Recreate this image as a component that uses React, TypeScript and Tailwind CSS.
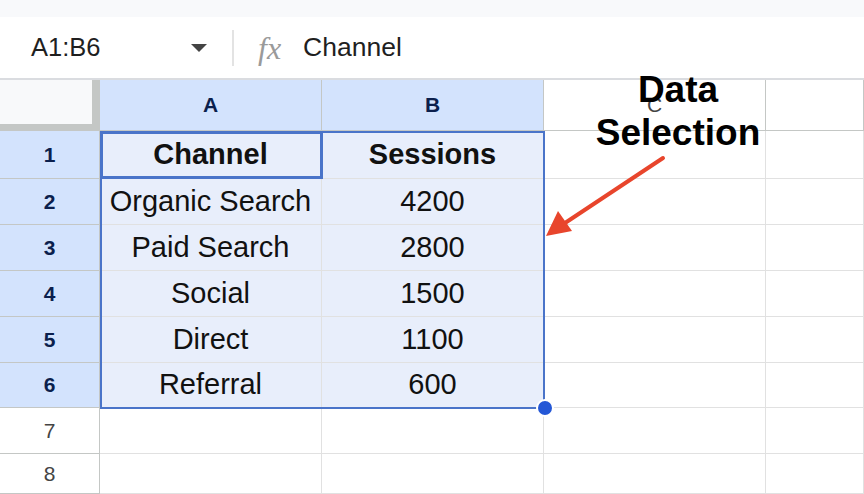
import React from "react";

const cols = ["A", "B", "C", ""];
const widths = ["w-[222px]", "w-[222px]", "w-[222px]", "flex-1"];
const data = [
  ["Channel", "Sessions"],
  ["Organic Search", "4200"],
  ["Paid Search", "2800"],
  ["Social", "1500"],
  ["Direct", "1100"],
  ["Referral", "600"],
  ["", ""],
  ["", ""],
];
const heights = ["h-[48px]", "h-[46px]", "h-[46px]", "h-[46px]", "h-[46px]", "h-[45px]", "h-[46px]", "h-[40px]"];

export default function App() {
  return (
    <div className="w-[864px] h-[494px] overflow-hidden bg-white relative" style={{ fontFamily: "Arial, 'Liberation Sans', sans-serif" }}>
      <div className="h-[17px] bg-[#f8f9fb]" />
      <div className="h-[63px] flex items-center border-b-2 border-[#dadce0] bg-white">
        <div className="w-[232px] flex items-center pl-[31px] pr-[24px] text-[25.5px] text-[#1f1f1f]">
          <span className="flex-1">A1:B6</span>
          <svg width="18" height="10" viewBox="0 0 18 10"><path d="M1 1h16L9 9z" fill="#444" /></svg>
        </div>
        <div className="w-[2px] h-[36px] bg-[#e3e3e3]" />
        <div className="ml-[24px] text-[#9a9a9a] italic text-[32px] leading-none" style={{ fontFamily: "'Liberation Serif', serif" }}>fx</div>
        <div className="ml-[22px] text-[26.5px] text-[#1f1f1f]">Channel</div>
      </div>
      {/* header row */}
      <div className="flex h-[51px]">
        <div className="w-[100px] bg-[#f8f9fa] border-r-[8px] border-b-[7px] border-[#c4c7c5] box-border" />
        {cols.map((c, i) => (
          <div key={i} className={`${widths[i]} flex items-center justify-center border-r border-b border-[#c4c7c5] text-[21px] ${i < 2 ? "bg-[#d3e3fd] font-bold text-[#0b1f4d]" : "bg-white text-[#444]"}`}>
            {c}
          </div>
        ))}
      </div>
      {data.map((r, ri) => (
        <div key={ri} className={`flex ${heights[ri]}`}>
          <div className={`w-[100px] flex items-center justify-center border-r border-b border-[#c4c7c5] text-[21px] ${ri < 6 ? "bg-[#d3e3fd] font-bold text-[#0b1f4d]" : "bg-white text-[#444]"}`}>
            {ri + 1}
          </div>
          {cols.map((c, ci) => (
            <div key={ci} className={`${widths[ci]} flex items-center justify-center border-r border-b border-[#e1e1e1] text-[29px] text-[#111] ${ri < 6 && ci < 2 ? "bg-[#e8eefb]" : "bg-white"} ${ri === 0 ? "font-bold" : ""}`}>
              {ci < 2 ? r[ci] : ""}
            </div>
          ))}
        </div>
      ))}
      <div className="absolute left-[100px] top-[131px] w-[445px] h-[278px] border-2 border-[#4a74c9] pointer-events-none" />
      <div className="absolute left-[100px] top-[131px] w-[223px] h-[48px] border-[3px] border-[#4a74c9]" />
      <div className="absolute left-[536px] top-[399px] w-[18px] h-[18px] rounded-full bg-[#2457d6] border-2 border-white" />
      <div className="absolute left-[578px] top-[68px] w-[200px] text-center font-bold text-[37px] leading-[43px] text-black">
        Data<br />Selection
      </div>
      <svg className="absolute left-0 top-0" width="864" height="494">
        <line x1="663" y1="158" x2="565" y2="223" stroke="#e8452c" strokeWidth="4" strokeLinecap="round" />
        <path d="M546 236 L558 211 L572 231 Z" fill="#e8452c" />
      </svg>
    </div>
  );
}
